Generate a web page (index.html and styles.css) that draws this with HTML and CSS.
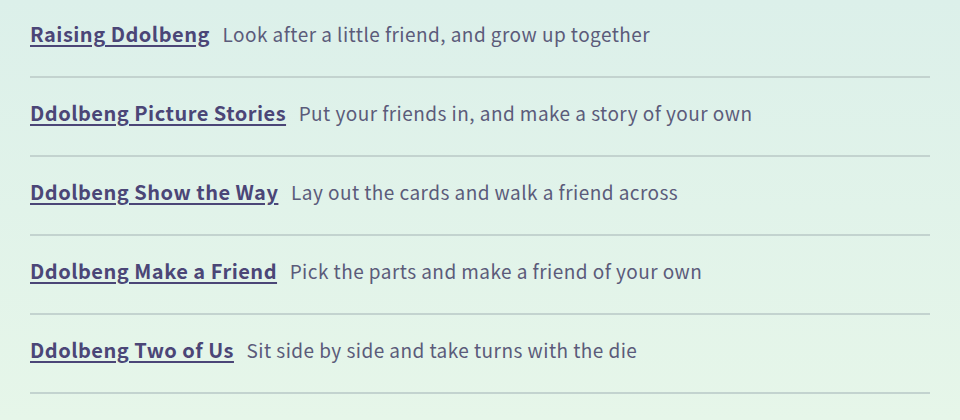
FILE: index.html
```html
<!DOCTYPE html>
<html lang="en">
  <head>
    <meta charset="UTF-8" />
    <meta name="viewport" content="width=device-width, initial-scale=1.0" />
    <title>Ddolbeng</title>
    <link rel="stylesheet" href="styles.css">
  </head>

  <body>
    <ul class="games">
      <li class="game">
        <a class="game-title" href="#">Raising Ddolbeng</a>
        <span class="game-desc">Look after a little friend, and grow up together</span>
      </li>
      <li class="game">
        <a class="game-title" href="#">Ddolbeng Picture Stories</a>
        <span class="game-desc">Put your friends in, and make a story of your own</span>
      </li>
      <li class="game">
        <a class="game-title" href="#">Ddolbeng Show the Way</a>
        <span class="game-desc">Lay out the cards and walk a friend across</span>
      </li>
      <li class="game">
        <a class="game-title" href="#">Ddolbeng Make a Friend</a>
        <span class="game-desc">Pick the parts and make a friend of your own</span>
      </li>
      <li class="game">
        <a class="game-title" href="#">Ddolbeng Two of Us</a>
        <span class="game-desc">Sit side by side and take turns with the die</span>
      </li>
      <li class="game">
        <a class="game-title" href="#">Ddolbeng Memory Match</a>
        <span class="game-desc">Turn over two cards and find the pairs</span>
      </li>
    </ul>
  </body>
</html>
```

FILE: styles.css
```css
* {
  padding: 0;
  margin: 0;
  box-sizing: border-box;
}

html,
body {
  height: 100%;
}

body {
  background: linear-gradient(180deg, #dcf0ea 0%, #e6f6e9 100%);
  font-family: "Noto Sans CJK KR", "Noto Sans", sans-serif;
  overflow: hidden;
}

.games {
  list-style: none;
  margin: -1px 30px 0;
}

.game {
  height: 79px;
  padding-top: 21px;
  line-height: 28px;
  border-bottom: 2px solid #c3d3cf;
  white-space: nowrap;
  overflow: hidden;
}

.game-title {
  color: #4b4677;
  font-size: 20px;
  font-weight: 700;
  letter-spacing: 0.5px;
  text-decoration: underline;
  text-underline-offset: 3px;
}

.game-desc {
  color: #5b5b7a;
  font-size: 19px;
  letter-spacing: 0.45px;
  margin-left: 9px;
}
```
